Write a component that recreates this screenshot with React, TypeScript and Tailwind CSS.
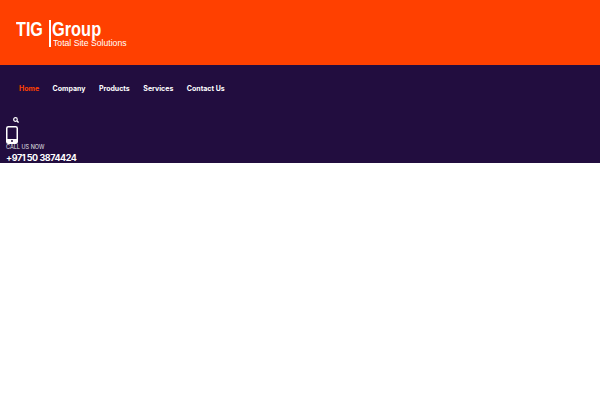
import React from 'react';

const links = ['Home', 'Company', 'Products', 'Services', 'Contact Us'];

function Logo() {
  return (
    <div className="flex items-start font-['Liberation_Sans',sans-serif] text-white">
      <span className="origin-left scale-x-[0.77] text-[21px] leading-[17px] font-bold w-[33px]">TIG</span>
      <span className="w-[2px] h-[27px] bg-white mr-[1px] shrink-0" />
      <div className="flex flex-col">
        <span className="origin-left scale-x-[0.78] text-[21px] leading-[17px] font-bold w-[72px] whitespace-nowrap">Group</span>
        <span className="origin-left scale-x-[0.91] text-[9.5px] leading-[10px] mt-[1px] ml-[1px] whitespace-nowrap font-normal">Total Site Solutions</span>
      </div>
    </div>
  );
}

function PhoneIcon() {
  return (
    <svg width="12" height="18" viewBox="0 0 12 18" fill="none">
      <rect x="0.75" y="0.75" width="10.5" height="16.5" rx="1.6" stroke="white" strokeWidth="1.5" />
      <rect x="1" y="13" width="10" height="4" fill="white" />
      <circle cx="6" cy="15" r="1" fill="#220d3f" />
    </svg>
  );
}

function SearchIcon() {
  return (
    <svg width="6" height="6" viewBox="0 0 7 7" fill="none">
      <circle cx="2.9" cy="2.9" r="2.1" stroke="white" strokeWidth="1.4" />
      <path d="M4.5 4.5L6.5 6.5" stroke="white" strokeWidth="1.6" />
    </svg>
  );
}

export default function App() {
  return (
    <div className="w-[600px] h-[400px] bg-white overflow-hidden font-['Inter',sans-serif]">
      <header className="h-[65px] bg-[#ff4000] pl-[16px] pt-[20px]">
        <Logo />
      </header>
      <nav className="h-[98px] bg-[#220d3f] text-white">
        <ul className="flex items-center gap-[13.5px] pl-[19px] h-[49px] text-[7px] font-bold">
          {links.map((link, i) => (
            <li key={link} className={i === 0 ? 'text-[#ff4000]' : 'text-white'}>{link}</li>
          ))}
        </ul>
        <div className="pl-[13px] pt-[3px] h-[12px]">
          <SearchIcon />
        </div>
        <div className="pl-[6px] h-[18px]">
          <PhoneIcon />
        </div>
        <div className="pl-[6px] text-[5.5px] leading-[7px] text-gray-200">CALL US NOW</div>
        <div className="pl-[6px] text-[9px] leading-[11px] font-bold mt-[1px] tracking-[-0.45px] whitespace-nowrap">+971 50 3874424</div>
      </nav>
    </div>
  );
}
